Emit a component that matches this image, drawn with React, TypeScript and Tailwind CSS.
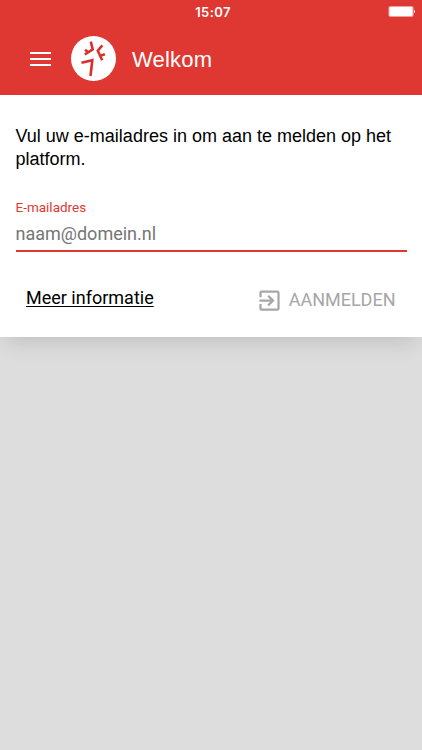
import React from "react";
import { MdExitToApp } from "react-icons/md";

const StatusBar: React.FC = () => (
  <div className="relative flex h-6 items-center justify-center">
    <span className="ml-1 font-['Inter'] text-[13px] font-semibold leading-6 tracking-[0.4px] text-white">
      15:07
    </span>
    {/* Battery */}
    <svg
      className="absolute right-[6px] top-[6px] h-[11px] w-7"
      viewBox="0 0 28 11"
      fill="none">
      <rect x="0.9" y="0.5" width="24.2" height="10" rx="1.2" stroke="#f6b9b5" strokeWidth="0.8" />
      <rect x="1.3" y="1.1" width="23.4" height="8.8" rx="0.6" fill="#fff" />
      <path d="M26 3.8a2 2 0 0 1 0 3.4z" fill="#fff" />
    </svg>
  </div>
);

const Logo: React.FC = () => (
  <svg className="h-[45px] w-[45px] flex-shrink-0" viewBox="0 0 45 45" fill="none">
    <circle cx="22.5" cy="22.5" r="22.5" fill="#fff" />
    <g stroke="#d9302b" strokeWidth="2.6">
      <path d="M19.8 5.6L21.7 13.3L13.8 18.5M14.1 13.8L17.2 16.2" />
      <path d="M31.3 9.3L26.8 14.7L31.2 24.2M29.2 19.8L33.9 18.2" />
      <path d="M10.5 26.7L21.3 24.2L19.5 40" />
    </g>
  </svg>
);

const Header: React.FC = () => (
  <header className="h-[94.5px] bg-[#df3832]">
    <StatusBar />
    <div className="flex h-[69px] items-center pl-[30px]">
      <button aria-label="Menu" className="flex w-[21px] flex-col gap-1">
        <span className="h-[2px] w-full bg-white" />
        <span className="h-[2px] w-full bg-white" />
        <span className="h-[2px] w-full bg-white" />
      </button>
      <div className="ml-[19.5px]">
        <Logo />
      </div>
      <h1 className="ml-[16.5px] mt-[3px] font-['Liberation_Sans'] text-[22px] leading-7 tracking-[0.2px] text-white">
        Welkom
      </h1>
    </div>
  </header>
);

export default function App() {
  return (
    <div className="h-[750px] w-full overflow-hidden bg-[#dddddd]">
      <Header />
      <main className="h-[242.5px] bg-white px-[15.5px] pt-[30px] shadow-[0_12px_20px_-6px_rgba(0,0,0,0.12)]">
        <p className="whitespace-nowrap font-['Liberation_Sans'] text-[18px] leading-[23px] text-black">
          Vul uw e-mailadres in om aan te melden op het
          <br />
          platform.
        </p>

        {/* Email field */}
        <div className="mt-[28px] font-['Roboto']">
          <label htmlFor="email" className="block text-[13.5px] leading-4 text-[#df3832]">
            E-mailadres
          </label>
          <input
            id="email"
            type="email"
            placeholder="naam@domein.nl"
            className="block h-[37px] w-full border-b-2 border-[#df3832] pb-1 pt-1.5 text-[18px] outline-none placeholder:text-[#757575]"
          />
        </div>

        {/* Actions */}
        <div className="mt-[34px] flex items-start justify-between pl-[10.5px] pr-[11px] font-['Roboto'] text-[18px] leading-6">
          <a href="#" className="text-black underline decoration-1 underline-offset-2">
            Meer informatie
          </a>
          <button className="mt-[1px] flex items-center text-[#a6a6a6]">
            <MdExitToApp className="mr-[6px] h-[27px] w-[27px]" />
            AANMELDEN
          </button>
        </div>
      </main>
    </div>
  );
}
